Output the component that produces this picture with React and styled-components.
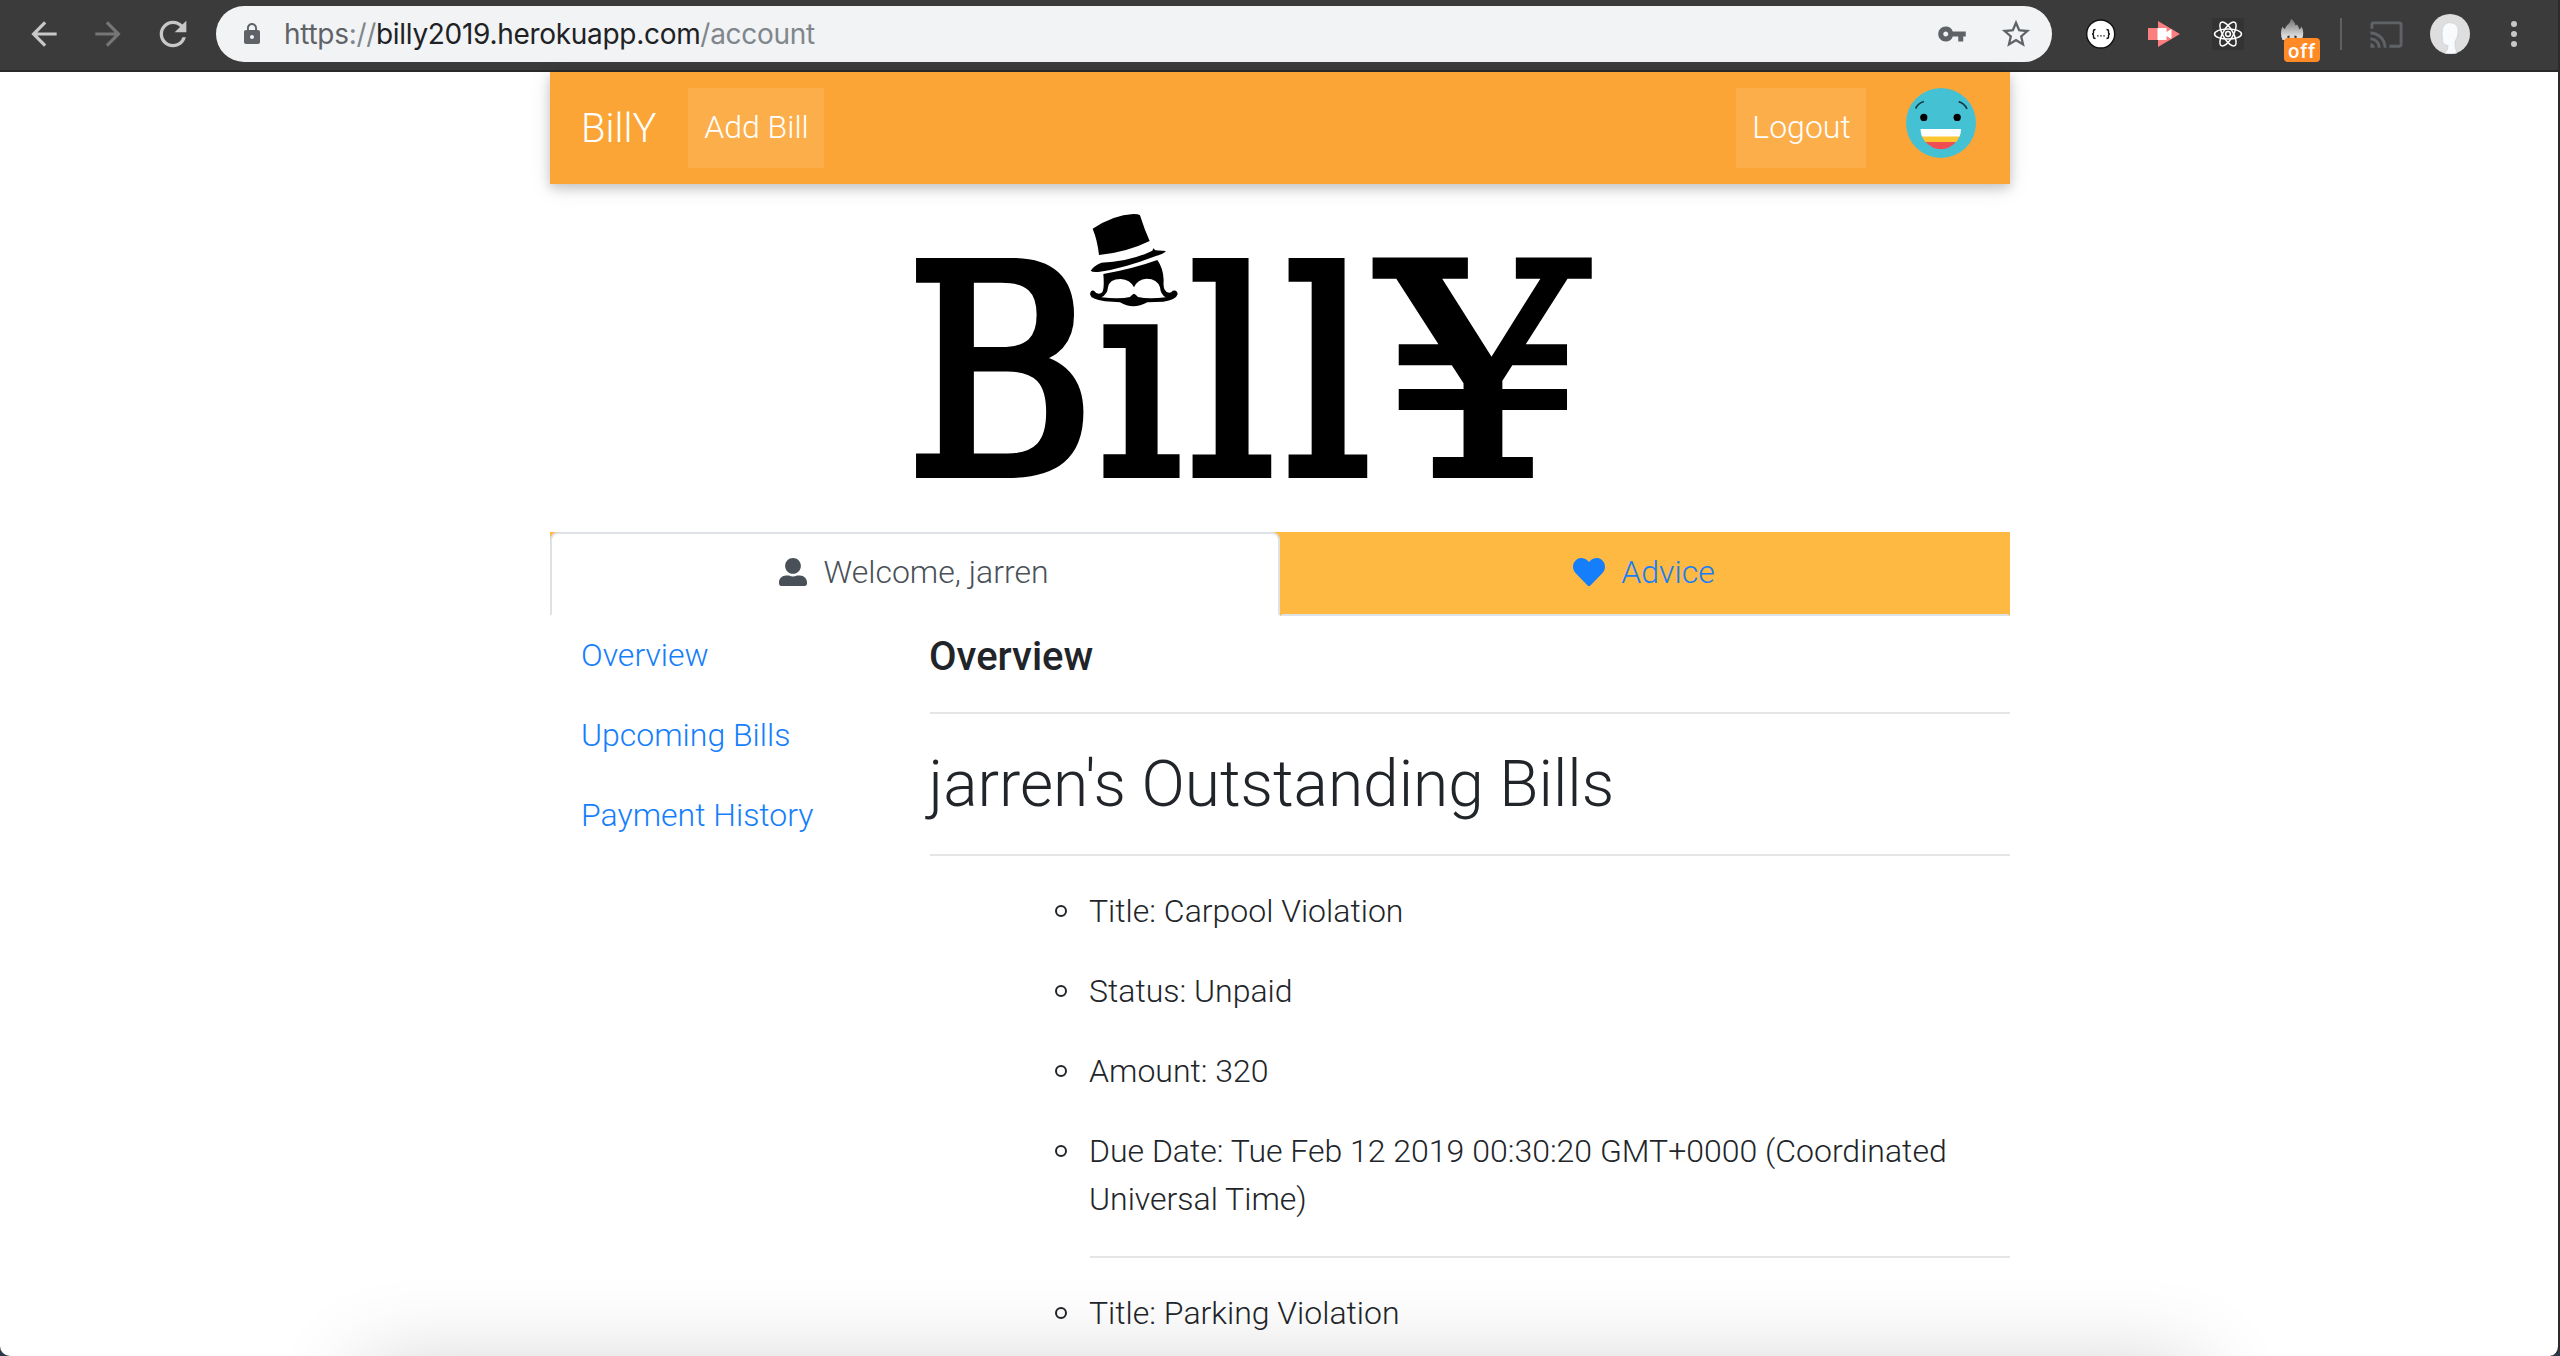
import React from "react";
import styled, { createGlobalStyle } from "styled-components";
import {
  MdArrowBack,
  MdArrowForward,
  MdRefresh,
  MdLock,
  MdVpnKey,
  MdStarBorder,
  MdCast,
} from "react-icons/md";
import { FaUserAlt, FaHeart } from "react-icons/fa";

const GlobalStyle = createGlobalStyle`
  *, *::before, *::after { box-sizing: border-box; }
  html, body { margin: 0; background: #2c3a48; }
  body {
    font-family: Roboto, "Liberation Sans", sans-serif;
    font-size: 32px;
    font-weight: 300;
    line-height: 1.5;
    color: #212529;
  }
`;

/* ---------- window ---------- */

const Window = styled.div`
  position: relative;
  width: 2560px;
  height: 1356px;
  overflow: hidden;
  display: flex;
  flex-direction: column;
  background: #fff;
  border-right: 2px solid #2b2b2b;
  border-radius: 0 0 10px 10px;
`;

const BottomShade = styled.div`
  position: absolute;
  left: 362px;
  right: 360px;
  bottom: -110px;
  height: 100px;
  box-shadow: 0 0 90px rgba(0, 0, 0, 0.19);
  pointer-events: none;
`;

/* ---------- browser toolbar ---------- */

const Toolbar = styled.header`
  flex: none;
  height: 72px;
  padding: 0 41px 2px 25px;
  display: flex;
  align-items: center;
  background: #3b3b3b;
  border-bottom: 2px solid #2a2a2a;
`;

const NavIcons = styled.div`
  display: flex;
  align-items: center;
  gap: 26px;
  width: 191px;
  flex: none;
`;

const NavIcon = styled.span`
  display: flex;
  color: ${(p) => (p.$dim ? "#767676" : "#c8c8c8")};
`;

const AddressBar = styled.div`
  flex: none;
  width: 1836px;
  height: 56px;
  padding: 0 19px 0 24px;
  display: flex;
  align-items: center;
  border-radius: 28px;
  background: #f1f3f4;
  color: #5f6368;
`;

const Url = styled.div`
  flex: 1;
  margin-left: 20px;
  font: 400 28px/56px Inter, "Liberation Sans", sans-serif;
  letter-spacing: -0.3px;
  color: #80868b;
`;

const Scheme = styled.span`
  color: #5f6368;
`;

const Host = styled.span`
  color: #202124;
`;

const AddressActions = styled.div`
  display: flex;
  align-items: center;
  gap: 32px;
`;

const Extensions = styled.div`
  margin-left: 34px;
  display: flex;
  align-items: center;
  gap: 32px;
`;

const ToolSvg = styled.svg`
  display: block;
  flex: none;
`;

const FlameBox = styled.div`
  position: relative;
  width: 40px;
  height: 32px;
  margin-left: 4px;
`;

const OffBadge = styled.span`
  position: absolute;
  left: 4px;
  top: 20px;
  width: 36px;
  height: 24px;
  border-radius: 4px;
  background: #ff8a26;
  color: #fff;
  font: 500 20px/26px Roboto, sans-serif;
  letter-spacing: 0.8px;
  text-align: center;
`;

const Divider = styled.div`
  width: 2px;
  height: 32px;
  margin: 0 27px 0 20px;
  background: #5f6062;
`;

const CastIcon = styled.span`
  display: flex;
  color: #5f6368;
  margin-right: 26px;
`;

const MenuDots = styled.div`
  margin-left: 41px;
  display: flex;
  flex-direction: column;
  gap: 4px;
`;

const Dot = styled.i`
  width: 6px;
  height: 6px;
  border-radius: 50%;
  background: #c8c8c8;
`;

/* ---------- page ---------- */

const Container = styled.main`
  width: 1460px;
  margin-left: 550px;
  flex: 1;
  min-height: 0;
`;

const Navbar = styled.nav`
  height: 112px;
  padding: 16px 34px 16px 31px;
  display: flex;
  align-items: center;
  background: #fca537;
  box-shadow: 0 4px 10px rgba(0, 0, 0, 0.16), 0 4px 20px rgba(0, 0, 0, 0.12);
`;

const Brand = styled.a`
  width: 75px;
  margin-right: 32px;
  padding-top: 2px;
  font-size: 40px;
  line-height: 60px;
  white-space: nowrap;
  color: #fff;
`;

const NavButton = styled.a`
  width: ${(p) => p.$width}px;
  height: 80px;
  padding-left: 1px;
  line-height: 78px;
  text-align: center;
  background: rgba(255, 255, 255, 0.1);
  color: #fff;
`;

const NavEnd = styled.div`
  margin-left: auto;
  display: flex;
  align-items: flex-start;
  gap: 40px;
`;

const LogoArt = styled.svg`
  display: block;
  width: 1460px;
  height: 348px;
  overflow: visible;
`;

const Letter = styled.text`
  font-family: "DejaVu Serif", serif;
  font-size: 300px;
  font-weight: 400;
  stroke: #000;
  stroke-linejoin: miter;
`;

const Tabs = styled.div`
  display: flex;
  height: 84px;
  background: #fdb941;
`;

const Tab = styled.a`
  flex: 1;
  padding: 14px 33px 18px 31px;
  display: flex;
  justify-content: center;
  align-items: center;
  gap: 16px;
  border: 2px solid;
  border-color: ${(p) =>
    p.$active ? "#dee2e6 #dee2e6 #fff" : "transparent transparent #dee2e6"};
  border-radius: ${(p) => (p.$active ? "8px 8px 0 0" : "0")};
  background: ${(p) => (p.$active ? "#fff" : "transparent")};
  color: ${(p) => (p.$active ? "#495057" : "#157efb")};

  svg {
    width: ${(p) => (p.$active ? 28 : 32)}px;
    height: 32px;
  }
`;

const Columns = styled.div`
  display: flex;
`;

const SideNav = styled.nav`
  width: 380px;
  flex: none;
  display: flex;
  flex-direction: column;
`;

const SideLink = styled.a`
  padding: 15px 32px 17px 31px;
  color: #157efb;
`;

const Content = styled.section`
  flex: 1;
  padding-top: 17px;
`;

const SectionTitle = styled.h5`
  margin: 0 0 0 -1px;
  font-size: 40px;
  font-weight: 500;
  line-height: 48px;
`;

const Rule = styled.hr`
  margin: ${(p) => (p.$tight ? 31 : 32)}px 0 32px;
  border: 0;
  border-top: 2px solid #e5e5e5;
`;

const Heading = styled.h2`
  margin: 0 0 0 -1.5px;
  font-size: 64px;
  font-weight: 300;
  line-height: 77px;
`;

const BillList = styled.ul`
  margin: 0;
  padding-left: 160px;
  list-style: none;
`;

const BillField = styled.li`
  display: flex;
  align-items: flex-start;
  margin: 0 0 32px -1px;
`;

const FieldText = styled.span`
  margin: -1px 0 1px;
`;

const Bullet = styled.span`
  flex: none;
  width: 12px;
  height: 12px;
  margin: 17px 22px 0 -34px;
  border: 2px solid #212529;
  border-radius: 50%;
`;

/* Each letter is stretched to its own box:
   [glyph, x0, x1, top, base, ink left, ink right, ink height, stroke] */
const LETTERS = [
  ["B", 916, 1085, 258, 478, 16.5, 204, 218.7, 10],
  ["ı", 1101, 1179.5, 324, 478, 8, 89, 156, 10],
  ["l", 1192, 1273, 258, 478, 8, 89, 228, 10],
  ["l", 1288, 1369, 258, 478, 8, 89, 228, 10],
  ["¥", 1373.5, 1592, 257.5, 478, -1.5, 192, 218.7, 6],
];

function fit([, x0, x1, top, base, inkL, inkR, inkH, stroke]) {
  const sx = (x1 - x0) / (inkR - inkL + stroke);
  const sy = (base - top) / (inkH + stroke);
  const tx = x0 - sx * (inkL - stroke / 2);
  const ty = base - (sy * stroke) / 2;
  return `translate(${tx} ${ty}) scale(${sx} ${sy})`;
}

function Logo() {
  return (
    <LogoArt viewBox="550 184 1460 348">
      {LETTERS.map((l, i) => (
        <Letter key={i} transform={fit(l)} strokeWidth={l[8]}>
          {l[0]}
        </Letter>
      ))}
      <g transform="translate(900 200) scale(0.33333)">
        <path d="M578 86Q640 45 700 42Q715 42 720 46Q733 88 749 123Q680 157 597 165Q592 120 578 86Z" />
        <path d="M572 212Q580 198 604 188Q690 185 757 152L760 145L766 151L798 153Q790 162 770 167Q670 205 600 215Q578 218 572 212Z" />
        <path d="M610 222Q700 206 772 180Q790 205 791 240Q788 268 800 276Q812 282 818 272Q832 268 833 283Q828 300 790 305L742 307Q720 319 700 319Q680 319 660 307L615 304Q572 298 570 283Q572 268 582 272Q592 286 605 278Q614 272 610 222Z" />
        <path
          fill="#fff"
          d="M702 262Q690 238 662 237Q628 237 624 262Q622 284 604 292Q660 298 690 291Q700 281 702 281Q704 281 714 291Q745 298 797 292Q782 284 780 262Q772 236 740 236Q712 238 702 262Z"
        />
      </g>
    </LogoArt>
  );
}

function SmileyAvatar() {
  return (
    <ToolSvg width="70" height="70" viewBox="0 0 70 70">
      <circle cx="35" cy="35" r="35" fill="#45c1d4" />
      <path
        d="M9.8 20.5Q11.5 15.5 18 13.5M52.7 13.7Q58.5 15.5 61 21"
        fill="none"
        stroke="#12404a"
        strokeWidth="1.8"
      />
      <circle cx="17.8" cy="29.4" r="3.6" />
      <circle cx="51.2" cy="29.4" r="3.6" />
      <clipPath id="mouth">
        <path d="M14.5 41H55Q55 49 49.5 54.5Q43 61.3 35 61.3T20 54.5Q14.5 49 14.5 41Z" />
      </clipPath>
      <g clipPath="url(#mouth)">
        <rect x="14" y="41" width="42" height="8" fill="#fff" />
        <rect x="14" y="48.5" width="42" height="6" fill="#fdc52f" />
        <rect x="14" y="54" width="42" height="8" fill="#ef4f52" />
      </g>
    </ToolSvg>
  );
}

function ExtensionIcons() {
  return (
    <Extensions>
      <ToolSvg width="30" height="30" viewBox="0 0 30 30">
        <circle cx="14.7" cy="15" r="14" fill="#fff" stroke="#111" strokeWidth="1.4" />
        <g fill="none" stroke="#111" strokeWidth="1.4">
          <path d="M9.5 10.5Q7.5 10.5 7.5 12V13.8Q7.5 15 6 15Q7.5 15 7.5 16.2V18Q7.5 19.5 9.5 19.5" />
          <path d="M20.5 10.5Q22.5 10.5 22.5 12V13.8Q22.5 15 24 15Q22.5 15 22.5 16.2V18Q22.5 19.5 20.5 19.5" />
        </g>
        <path d="M11.2 16.3h1.3v1.3h-1.3zM14.3 16.3h1.3v1.3h-1.3zM17.4 16.3h1.3v1.3h-1.3z" />
      </ToolSvg>
      <ToolSvg width="32" height="26" viewBox="0 0 32 26">
        <path d="M0 7H10V0L32 13L10 26V19H0Z" fill="#fc7f7f" />
        <path d="M9.5 7H18.5V11L23.5 8V18L18.5 15V19H9.5Z" fill="#fff" />
      </ToolSvg>
      <ToolSvg width="32" height="32" viewBox="0 0 32 32">
        <rect width="32" height="32" rx="1" fill="#333" />
        <g fill="none" stroke="#fff" strokeWidth="1.5">
          <ellipse cx="16" cy="16" rx="13.5" ry="5.1" />
          <ellipse cx="16" cy="16" rx="13.5" ry="5.1" transform="rotate(60 16 16)" />
          <ellipse cx="16" cy="16" rx="13.5" ry="5.1" transform="rotate(120 16 16)" />
          <circle cx="16" cy="16" r="2.4" />
        </g>
      </ToolSvg>
      <FlameBox>
        <ToolSvg width="24" height="24" viewBox="0 0 24 24">
          <defs>
            <linearGradient id="flame" x1="0" y1="0" x2="0" y2="1">
              <stop offset="0.1" stopColor="#808080" />
              <stop offset="0.8" stopColor="#dadada" />
            </linearGradient>
          </defs>
          <path
            d="M2.5 22Q-0.5 15 2.5 8.5Q3.5 10.5 5 11Q5.5 8 8 6.5Q10.5 4.5 11 1Q15 3.5 15.5 7.5L17 6.5Q19 8.5 19 11.5Q21 10.5 21.5 8.5Q25 15 21.5 22Z"
            fill="url(#flame)"
          />
          <path d="M7 19.5Q7 17.5 9.5 17.5V20ZM17 19.5Q17 17.5 14.5 17.5V20Z" fill="#2a2a2a" />
        </ToolSvg>
        <OffBadge>off</OffBadge>
      </FlameBox>
    </Extensions>
  );
}

function ProfilePicture() {
  return (
    <ToolSvg width="40" height="40" viewBox="0 0 40 40">
      <circle cx="20" cy="20" r="20" fill="#dedede" />
      <path
        d="M12 20Q11.5 9 20 8.5Q29.5 9 28 19Q27.5 24 25 27.5Q24.5 33 27 39Q21 41 14.5 39Q18.5 36 18 31.5Q13 31 12.5 27Z"
        fill="#f8fafb"
        stroke="#cbd2d9"
        strokeWidth="0.8"
      />
    </ToolSvg>
  );
}

const FIELDS = [
  "Title: Carpool Violation",
  "Status: Unpaid",
  "Amount: 320",
  "Due Date: Tue Feb 12 2019 00:30:20 GMT+0000 (Coordinated Universal Time)",
];

function Field({ children }) {
  return (
    <BillField>
      <Bullet />
      <FieldText>{children}</FieldText>
    </BillField>
  );
}

export default function App() {
  return (
    <>
      <GlobalStyle />
      <Window>
        <Toolbar>
          <NavIcons>
            <NavIcon><MdArrowBack size={38} /></NavIcon>
            <NavIcon $dim><MdArrowForward size={38} /></NavIcon>
            <NavIcon><MdRefresh size={40} /></NavIcon>
          </NavIcons>
          <AddressBar>
            <MdLock size={24} />
            <Url>
              <Scheme>https</Scheme>://<Host>billy2019.herokuapp.com</Host>/account
            </Url>
            <AddressActions>
              <MdVpnKey size={30} />
              <MdStarBorder size={34} />
            </AddressActions>
          </AddressBar>
          <ExtensionIcons />
          <Divider />
          <CastIcon><MdCast size={35} /></CastIcon>
          <ProfilePicture />
          <MenuDots>
            <Dot />
            <Dot />
            <Dot />
          </MenuDots>
        </Toolbar>

        <Container>
          <Navbar>
            <Brand>BillY</Brand>
            <NavButton $width={136}>Add Bill</NavButton>
            <NavEnd>
              <NavButton $width={130}>Logout</NavButton>
              <SmileyAvatar />
            </NavEnd>
          </Navbar>

          <Logo />

          <Tabs>
            <Tab $active><FaUserAlt />Welcome, jarren</Tab>
            <Tab><FaHeart />Advice</Tab>
          </Tabs>

          <Columns>
            <SideNav>
              <SideLink>Overview</SideLink>
              <SideLink>Upcoming Bills</SideLink>
              <SideLink>Payment History</SideLink>
            </SideNav>
            <Content>
              <SectionTitle>Overview</SectionTitle>
              <Rule $tight />
              <Heading>jarren's Outstanding Bills</Heading>
              <Rule $tight />
              <BillList>
                {FIELDS.map((f) => (
                  <Field key={f}>{f}</Field>
                ))}
                <Rule />
                <Field>Title: Parking Violation</Field>
              </BillList>
            </Content>
          </Columns>
        </Container>
        <BottomShade />
      </Window>
    </>
  );
}
